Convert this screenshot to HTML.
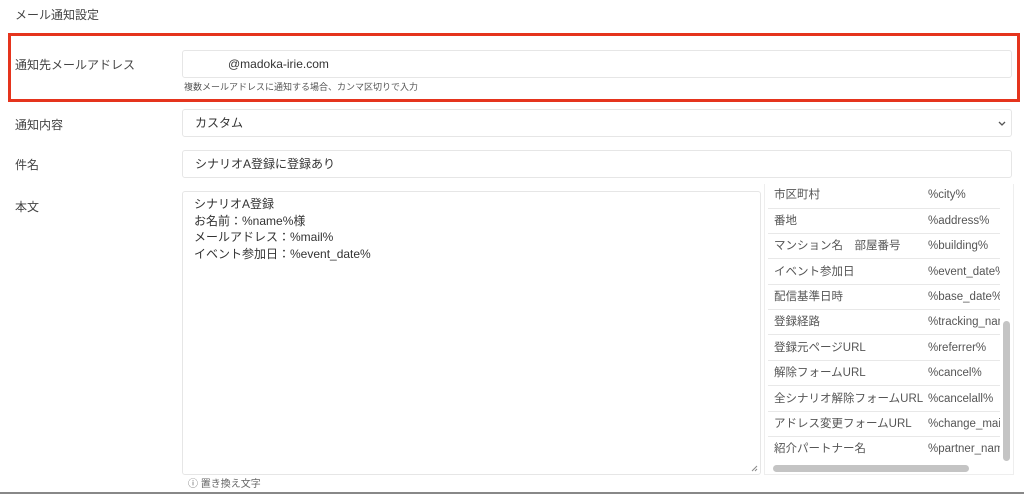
<!DOCTYPE html>
<html><head><meta charset="utf-8"><style>
*{box-sizing:border-box;margin:0;padding:0}
body{width:1024px;height:497px;background:#fff;font-family:"Liberation Sans","Noto Sans CJK JP",sans-serif;color:#333;position:relative;overflow:hidden;font-size:12px;line-height:16px}
.a{position:absolute}
.lbl{position:absolute;left:15px;font-size:12px;color:#444}
.box{position:absolute;border:1px solid #e6e6e6;border-radius:3px;background:#fff;font-size:12px;color:#333;padding-left:12px;display:flex;align-items:center}
.row{position:absolute;left:768px;width:232px;height:25px;border-bottom:1px solid #e8e8e8;font-size:11.5px;color:#555;line-height:15px}
.row span{position:absolute;top:5px}
.row .k{left:6px}.row .v{left:160px;white-space:nowrap;width:72px;overflow:hidden}
</style></head><body>
<div class="lbl" style="top:7px">メール通知設定</div>
<div class="a" style="left:8px;top:33px;width:1012px;height:69px;border:3px solid #e5341d"></div>
<div class="lbl" style="top:57px">通知先メールアドレス</div>
<div class="box" style="left:182px;top:50px;width:830px;height:28px;padding-left:45px">@madoka-irie.com</div>
<div class="a" style="left:184px;top:81px;font-size:9px;line-height:12px;color:#555">複数メールアドレスに通知する場合、カンマ区切りで入力</div>
<div class="lbl" style="top:117px">通知内容</div>
<div class="box" style="left:182px;top:109px;width:830px;height:28px">カスタム<svg class="a" style="right:4px;top:10px" width="10" height="8" viewBox="0 0 10 8"><path d="M2 2l3 3 3-3" fill="none" stroke="#555" stroke-width="1.3"/></svg></div>
<div class="lbl" style="top:157px">件名</div>
<div class="box" style="left:182px;top:150px;width:830px;height:28px">シナリオA登録に登録あり</div>
<div class="lbl" style="top:199px">本文</div>
<div class="box" style="left:182px;top:191px;width:579px;height:284px;padding-top:4px;line-height:16.5px;padding-left:11px;display:block">シナリオA登録<br>お名前：%name%様<br>メールアドレス：%mail%<br>イベント参加日：%event_date%
<svg class="a" style="right:2px;bottom:2px" width="7" height="7"><path d="M1 6L6 1M4 6L6 4" stroke="#888"/></svg></div>
<div class="a" style="left:764px;top:184px;width:250px;height:291px;border-left:1px solid #eee;border-right:1px solid #eee;border-bottom:1px solid #eee"></div>
<div class="row" style="top:184px"><span class="k" style="top:4px">市区町村</span><span class="v" style="top:4px">%city%</span></div>
<div class="row" style="top:209px"><span class="k">番地</span><span class="v">%address%</span></div>
<div class="row" style="top:234px"><span class="k">マンション名　部屋番号</span><span class="v">%building%</span></div>
<div class="row" style="top:260px"><span class="k">イベント参加日</span><span class="v">%event_date%</span></div>
<div class="row" style="top:285px"><span class="k">配信基準日時</span><span class="v">%base_date%</span></div>
<div class="row" style="top:310px"><span class="k">登録経路</span><span class="v">%tracking_name%</span></div>
<div class="row" style="top:336px"><span class="k">登録元ページURL</span><span class="v">%referrer%</span></div>
<div class="row" style="top:361px"><span class="k">解除フォームURL</span><span class="v">%cancel%</span></div>
<div class="row" style="top:387px"><span class="k">全シナリオ解除フォームURL</span><span class="v">%cancelall%</span></div>
<div class="row" style="top:412px"><span class="k">アドレス変更フォームURL</span><span class="v">%change_mail%</span></div>
<div class="row" style="top:437px;border-bottom:none"><span class="k">紹介パートナー名</span><span class="v">%partner_name%</span></div>
<div class="a" style="left:773px;top:465px;width:196px;height:7px;border-radius:4px;background:#c4c4c4"></div>
<div class="a" style="left:1003px;top:321px;width:7px;height:140px;border-radius:4px;background:#c4c4c4"></div>
<div class="a" style="left:188px;top:479px;font-size:10px;line-height:12px;color:#666">ⓘ 置き換え文字</div>
<div class="a" style="left:0;top:492px;width:1024px;height:2px;background:#888"></div>
</body></html>
